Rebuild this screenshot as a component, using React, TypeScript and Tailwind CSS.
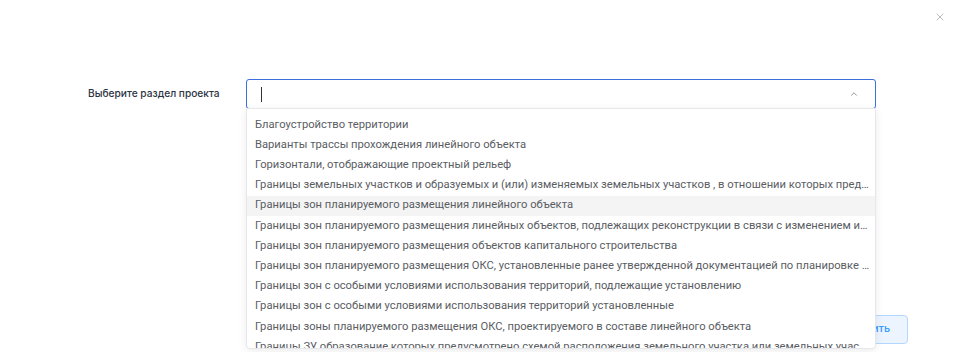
import { ChevronUp, X } from "lucide-react";

const options = [
  "Благоустройство территории",
  "Варианты трассы прохождения линейного объекта",
  "Горизонтали, отображающие проектный рельеф",
  "Границы земельных участков и образуемых и (или) изменяемых земельных участков , в отношении которых предполагается их резервирование и (или) изъятие",
  "Границы зон планируемого размещения линейного объекта",
  "Границы зон планируемого размещения линейных объектов, подлежащих реконструкции в связи с изменением их местоположения",
  "Границы зон планируемого размещения объектов капитального строительства",
  "Границы зон планируемого размещения ОКС, установленные ранее утвержденной документацией по планировке территории",
  "Границы зон с особыми условиями использования территорий, подлежащие установлению",
  "Границы зон с особыми условиями использования территорий установленные",
  "Границы зоны планируемого размещения ОКС, проектируемого в составе линейного объекта",
  "Границы ЗУ образование которых предусмотрено схемой расположения земельного участка или земельных участков на кадастровом плане территории",
];

export default function App() {
  return (
    <div className="relative w-full h-[352px] bg-white overflow-hidden" style={{ fontFamily: "Roboto, 'Noto Sans', sans-serif" }}>
      <button className="absolute top-[11px] right-[14px] text-[#9a9ca3]">
        <X size={12} strokeWidth={1.4} />
      </button>

      <div className="pt-[79px] pl-[88px]">
        <div className="flex items-center pr-[84px]">
          <label className="w-[158px] shrink-0 text-[10.2px] font-medium text-[#2c3443]" style={{ fontFamily: "Inter, sans-serif" }}>
            Выберите раздел проекта
          </label>
          <div className="relative flex-1">
            <div className="h-[30px] rounded-[3px] border border-[#3c6fdc] flex items-center pl-[14px] pr-[16px]">
              <span className="w-px h-[15px] bg-[#333]" />
              <span className="flex-1" />
              <ChevronUp size={10} strokeWidth={2} className="text-[#7c7f86]" />
            </div>
            <div className="absolute left-0 right-0 top-[29px] h-[241px] overflow-hidden bg-white rounded-b-[4px] border border-[#e6e7ea] shadow-[0_2px_8px_rgba(0,0,0,0.08)] pt-[6px] z-10">
              {options.map((o, i) => (
                <div
                  key={i}
                  className={`h-[20.2px] flex items-center pl-[8px] pr-[5px] text-[11.2px] text-[#5a5d63] ${i === 4 ? "bg-[#f4f4f5]" : ""}`}
                >
                  <span className="truncate">{o}</span>
                </div>
              ))}
            </div>
          </div>
        </div>

        <div className="flex justify-end pr-[52px] mt-[206px]">
          <button className="h-[29px] px-[17px] rounded-[4px] border border-[#b3d8ff] bg-[#ecf5ff] text-[#409eff] text-[11px] font-medium">
            Сохранить
          </button>
        </div>
      </div>
    </div>
  );
}
